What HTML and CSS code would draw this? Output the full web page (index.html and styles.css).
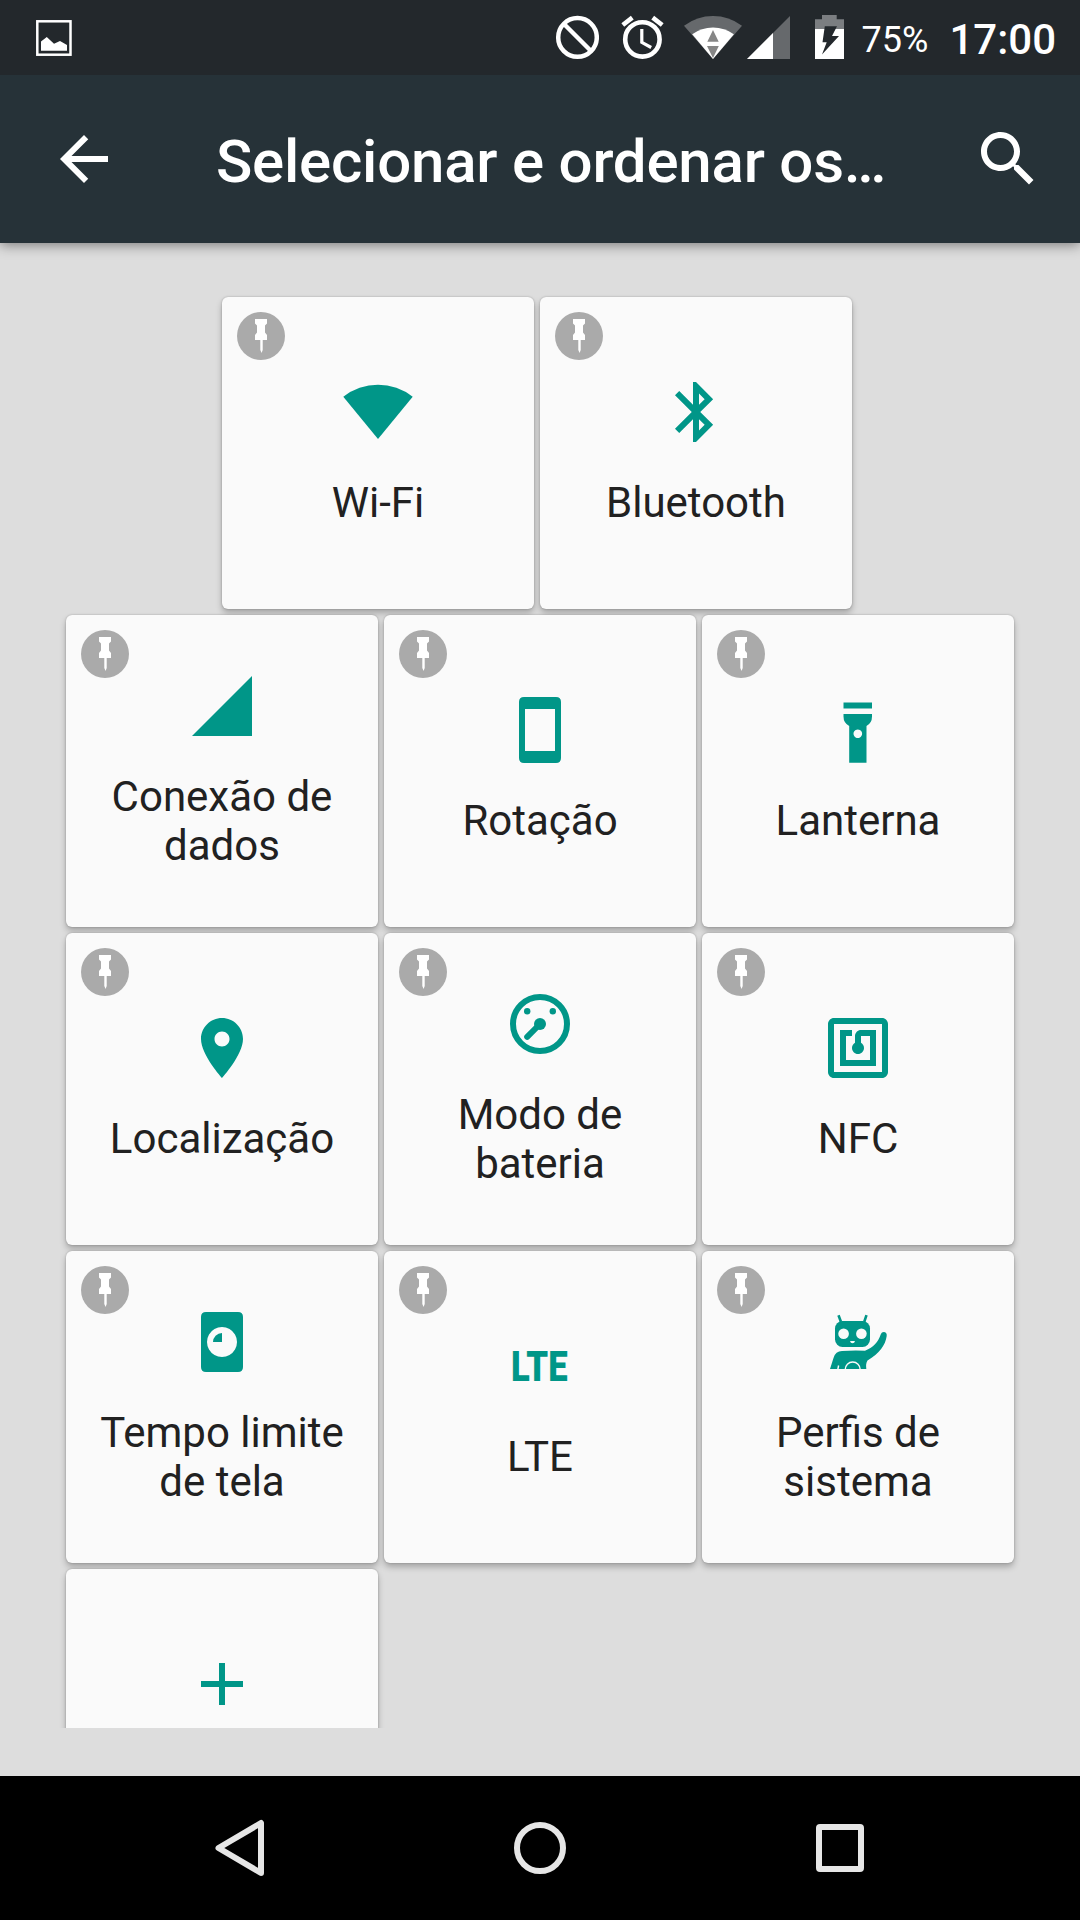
FILE: index.html
```html
<!DOCTYPE html>
<html lang="pt-BR">
<head>
<meta charset="utf-8">
<title>Selecionar e ordenar os blocos</title>
<link rel="stylesheet" href="styles.css">
</head>
<body>
<svg class="defs" width="0" height="0" aria-hidden="true">
  <symbol id="pin" viewBox="0 0 48 48">
    <circle cx="24" cy="24" r="24" fill="#aaaaaa"/>
    <path fill="#fff" d="M18 7H30V11.5L28 13.5V20.5L30 23V28H25.7V38L24.6 41L23.3 38V28H18V23L20 20.5V13.5L18 11.5Z"/>
  </symbol>
</svg>
<div class="screen">
  <header class="status">
    <svg class="s-picture" width="36" height="36" viewBox="0 0 36 36"><rect x="1.3" y="1.3" width="33.2" height="33.4" fill="none" stroke="#fff" stroke-width="2.5"/><path fill="#fff" d="M5 21.500L10.800 17L18 23.700L24 21L31 25V30.700H5Z"/></svg>
    <div class="status-right">
      <svg class="s-block" width="44" height="44" viewBox="0 0 44 44"><g fill="none" stroke="#fff" stroke-width="4.500"><circle cx="22.500" cy="22.400" r="19.300"/><path d="M9 9L36 36"/></g></svg>
      <svg class="s-alarm" width="44" height="44" viewBox="0 0 44 44"><g fill="none" stroke="#fff"><circle cx="22.400" cy="24.400" r="17.200" stroke-width="4.600"/><path stroke-width="3.200" d="M21.800 14V27.300L31.200 32.500"/><path stroke-width="4.600" d="M2.800 10L12.300 2.600M32.700 2.600L42.200 10"/></g></svg>
      <svg class="s-wifi" width="58" height="44" viewBox="0 0 58 44"><path fill="#66696c" d="M29 44L0 10.700Q13 1 29 1T58 10.700Z"/><path fill="#fff" d="M29 44L8.200 19.200Q17.500 12.500 29 12.500T49.900 19.200Z"/><path fill="#868686" d="M23.300 26.700L29 15L34.700 26.700ZM23 31H34.800L29 43Z"/></svg>
      <svg class="s-signal" width="43" height="44" viewBox="0 0 43 44"><path fill="#66696c" d="M43 1V44H0Z"/><path fill="#fff" d="M26 18V44H0Z"/></svg>
      <svg class="s-battery" width="29" height="44" viewBox="0 0 29 44"><path fill="#7b7e81" d="M7 0H21.700V4.300H29V14H0V4.300H7Z"/><path fill="#fff" d="M0 14H29V44H0Z"/><path fill="#23282c" d="M9.800 11.300H22L17 21H24L7 39.500L11.700 27.200H7.500Z"/></svg>
      <span class="percent">75%</span>
      <span class="clock">17:00</span>
    </div>
  </header>
  <div class="toolbar">
    <svg width="72" height="72" viewBox="0 0 24 24" fill="#fff"><path d="M20 11H7.830l5.590-5.590L12 4l-8 8 8 8 1.410-1.410L7.830 13H20v-2z"/></svg>
    <h1>Selecionar e ordenar os…</h1>
    <svg width="72" height="72" viewBox="0 0 24 24" fill="#fff"><path d="M15.500 14h-.79l-.28-.27C15.410 12.590 16 11.110 16 9.500 16 5.910 13.090 3 9.500 3S3 5.910 3 9.500 5.910 16 9.500 16c1.610 0 3.090-.59 4.230-1.570l.27.28v.79l5 4.990L20.490 19l-4.990-5zm-6 0C7.010 14 5 11.990 5 9.500S7.010 5 9.500 5 14 7.010 14 9.500 11.990 14 9.500 14z"/></svg>
  </div>
  <main class="tiles">
    <div class="row row-main">
      <div class="tile"><svg class="pin"><use href="#pin"/></svg>
        <svg class="icon" viewBox="0 0 72 72"><path d="M36 63L1.300 20.700A56 56 0 0 1 70.700 20.700Z"/></svg>
        <span class="label">Wi-Fi</span></div>
      <div class="tile"><svg class="pin"><use href="#pin"/></svg>
        <svg class="icon" viewBox="0 0 24 24"><path d="M17.710 7.710L12 2h-1v7.590L6.410 5 5 6.410 10.590 12 5 17.590 6.410 19 11 14.410V22h1l5.710-5.710-4.300-4.290 4.300-4.290zM13 5.830l1.880 1.880L13 9.590V5.830zm1.880 10.460L13 18.170v-3.760l1.880 1.880z"/></svg>
        <span class="label">Bluetooth</span></div>
    </div>
    <div class="row">
      <div class="tile"><svg class="pin"><use href="#pin"/></svg>
        <svg class="icon" viewBox="0 0 72 72"><path d="M66 6V66H6Z"/></svg>
        <span class="label">Conexão de dados</span></div>
      <div class="tile"><svg class="pin"><use href="#pin"/></svg>
        <svg class="icon" viewBox="0 0 72 72"><path fill-rule="evenodd" d="M20 3H52Q57 3 57 8V64Q57 69 52 69H20Q15 69 15 64V8Q15 3 20 3ZM21 15V57H51V15Z"/></svg>
        <span class="label">Rotação</span></div>
      <div class="tile"><svg class="pin"><use href="#pin"/></svg>
        <svg class="icon" viewBox="0 0 72 72"><path fill-rule="evenodd" d="M21.500 8.500H50V14.500H21.500ZM21.500 20H50V22.500Q50 29 44.500 32V68.800H27.200V32Q21.500 29 21.500 22.500ZM35.800 35.400a4.300 4.300 0 1 0 .01 0Z"/></svg>
        <span class="label">Lanterna</span></div>
    </div>
    <div class="row">
      <div class="tile"><svg class="pin"><use href="#pin"/></svg>
        <svg class="icon" viewBox="0 0 24 24"><path d="M12 2C8.130 2 5 5.130 5 9c0 5.250 7 13 7 13s7-7.750 7-13c0-3.870-3.130-7-7-7zm0 9.500c-1.380 0-2.500-1.120-2.500-2.500s1.120-2.500 2.500-2.500 2.500 1.120 2.500 2.500-1.120 2.500-2.500 2.500z"/></svg>
        <span class="label">Localização</span></div>
      <div class="tile"><svg class="pin"><use href="#pin"/></svg>
        <svg class="icon" viewBox="0 0 72 72"><g fill="none" stroke="currentColor" stroke-width="6" stroke-linecap="round"><circle cx="36" cy="36" r="27"/><path d="M36 36L23.200 48.800"/></g><circle cx="36" cy="36" r="6"/><circle cx="23.200" cy="23.200" r="3.200"/><circle cx="48.800" cy="23.200" r="3.200"/></svg>
        <span class="label">Modo de bateria</span></div>
      <div class="tile"><svg class="pin"><use href="#pin"/></svg>
        <svg class="icon" viewBox="0 0 24 24"><path d="M20 2H4c-1.100 0-2 .9-2 2v16c0 1.100.9 2 2 2h16c1.100 0 2-.9 2-2V4c0-1.100-.9-2-2-2zm0 18H4V4h16v16zM18 6h-5c-1.100 0-2 .9-2 2v2.280c-.6.35-1 .98-1 1.720 0 1.100.9 2 2 2s2-.9 2-2c0-.74-.4-1.380-1-1.720V8h3v8H8V8h2V6H6v12h12V6z"/></svg>
        <span class="label">NFC</span></div>
    </div>
    <div class="row">
      <div class="tile"><svg class="pin"><use href="#pin"/></svg>
        <svg class="icon" viewBox="0 0 72 72"><path fill-rule="evenodd" d="M20 6H52Q57 6 57 11V61Q57 66 52 66H20Q15 66 15 61V11Q15 6 20 6ZM36 21a15 15 0 1 0 .01 0Z"/><path d="M36 36H27A9 9 0 0 1 36 27Z"/></svg>
        <span class="label">Tempo limite de tela</span></div>
      <div class="tile"><svg class="pin"><use href="#pin"/></svg>
        <svg class="icon" viewBox="0 0 72 72"><text class="lte" x="7" y="51" textLength="56.500" lengthAdjust="spacingAndGlyphs">LTE</text></svg>
        <span class="label">LTE</span></div>
      <div class="tile"><svg class="pin"><use href="#pin"/></svg>
        <svg class="icon" viewBox="0 0 72 72"><rect x="13" y="15" width="35" height="26" rx="7.500"/><path fill="none" stroke="currentColor" stroke-width="2.600" d="M16.500 9.200L19 16M44.500 9.200L42.200 16"/><path d="M8 63L11.500 52Q13.500 45 20 45Q32 44 43 44.700C52 41 56 36 58.700 28.500C60 24.500 65.500 25.500 64.700 30C63.500 39 57.500 47.500 45.500 54.500Q43.500 57.500 44.300 63Z"/><g fill="#fafafa"><circle cx="21.600" cy="27.700" r="5.300"/><circle cx="39.400" cy="27.700" r="5.300"/><path d="M28 35H33Q32.500 37.200 30.500 37.200T28 35Z"/></g><path fill="none" stroke="#fafafa" stroke-width="1.400" d="M23.200 63.500A7.500 7.500 0 0 1 38.200 63.500M16.600 59.500L15.800 63.500"/></svg>
        <span class="label">Perfis de sistema</span></div>
    </div>
    <div class="row">
      <div class="tile">
        <svg class="icon" viewBox="0 0 24 24"><path d="M19 13h-6v6h-2v-6H5v-2h6V5h2v6h6v2z"/></svg>
        <span class="label"></span></div>
    </div>
  </main>
  <nav class="nav">
    <svg width="300" height="144" viewBox="0 0 300 144"><path fill="none" stroke="#e6e6e6" stroke-width="6" stroke-linejoin="round" d="M171 47V97L128.500 72Z"/></svg>
    <svg width="300" height="144" viewBox="0 0 300 144"><circle cx="150" cy="72" r="23" fill="none" stroke="#e6e6e6" stroke-width="6"/></svg>
    <svg width="300" height="144" viewBox="0 0 300 144"><path fill="#e6e6e6" fill-rule="evenodd" d="M130 48H170Q174 48 174 52V92Q174 96 170 96H130Q126 96 126 92V52Q126 48 130 48ZM132 54V90H168V54Z"/></svg>
  </nav>
</div>
</body>
</html>
```
FILE: styles.css
```css
* { box-sizing: border-box; }
body { margin: 0; font-family: Roboto, "Liberation Sans", sans-serif; }
svg { display: block; flex: none; }
.defs { position: absolute; }
.screen {
  width: 1080px;
  height: 1920px;
  display: flex;
  flex-direction: column;
  background: #dddddd;
  overflow: hidden;
}
.status {
  height: 75px;
  flex: none;
  display: flex;
  justify-content: space-between;
  align-items: flex-start;
  padding: 0 24px 0 36px;
  background: #23282c;
  color: #fff;
  z-index: 2;
}
.s-picture { margin-top: 20px; }
.status-right { display: flex; }
.status-right svg { margin-top: 15px; }
.s-alarm { margin-left: 21px; }
.s-wifi { margin-left: 20px; }
.s-signal { margin-left: 5px; }
.s-battery { margin-left: 25px; }
.percent {
  margin: 19px 0 0 18px;
  font-size: 36px;
  line-height: 42px;
}
.clock {
  margin: 15px 0 0 21px;
  font-size: 42px;
  line-height: 50px;
  font-weight: 500;
}
.toolbar {
  height: 168px;
  flex: none;
  display: flex;
  align-items: center;
  padding: 0 36px 0 48px;
  background: #263238;
  color: #fff;
  box-shadow: 0 2px 12px rgba(0, 0, 0, .45);
  z-index: 1;
}
.toolbar h1 {
  flex: 1;
  margin: 6px 0 0 96px;
  font-size: 60px;
  line-height: 72px;
  font-weight: 500;
  letter-spacing: -.22px;
  white-space: nowrap;
}
.tiles {
  height: 1485px;
  flex: none;
  display: flex;
  flex-direction: column;
  gap: 6px;
  padding: 54px 66px 0;
  overflow: hidden;
}
.row { display: flex; gap: 6px; flex: none; }
.row-main { padding-left: 156px; }
.tile {
  position: relative;
  width: 312px;
  height: 312px;
  display: flex;
  flex-direction: column;
  align-items: center;
  justify-content: center;
  padding: 0 24px 2px;
  border-radius: 6px;
  background: #fafafa;
  box-shadow: 0 0 2px rgba(0, 0, 0, .25), 0 4px 6px rgba(0, 0, 0, .25);
}
.pin { position: absolute; left: 15px; top: 15px; width: 48px; height: 48px; }
.icon { width: 72px; height: 72px; fill: #009688; color: #009688; overflow: visible; }
.lte { font-size: 42px; font-weight: 900; }
.label {
  margin-top: 30px;
  min-height: 50px;
  font-size: 42px;
  line-height: 49px;
  color: #212121;
  text-align: center;
}
.nav {
  height: 144px;
  flex: none;
  margin-top: auto;
  display: flex;
  justify-content: center;
  background: #000;
}
```
